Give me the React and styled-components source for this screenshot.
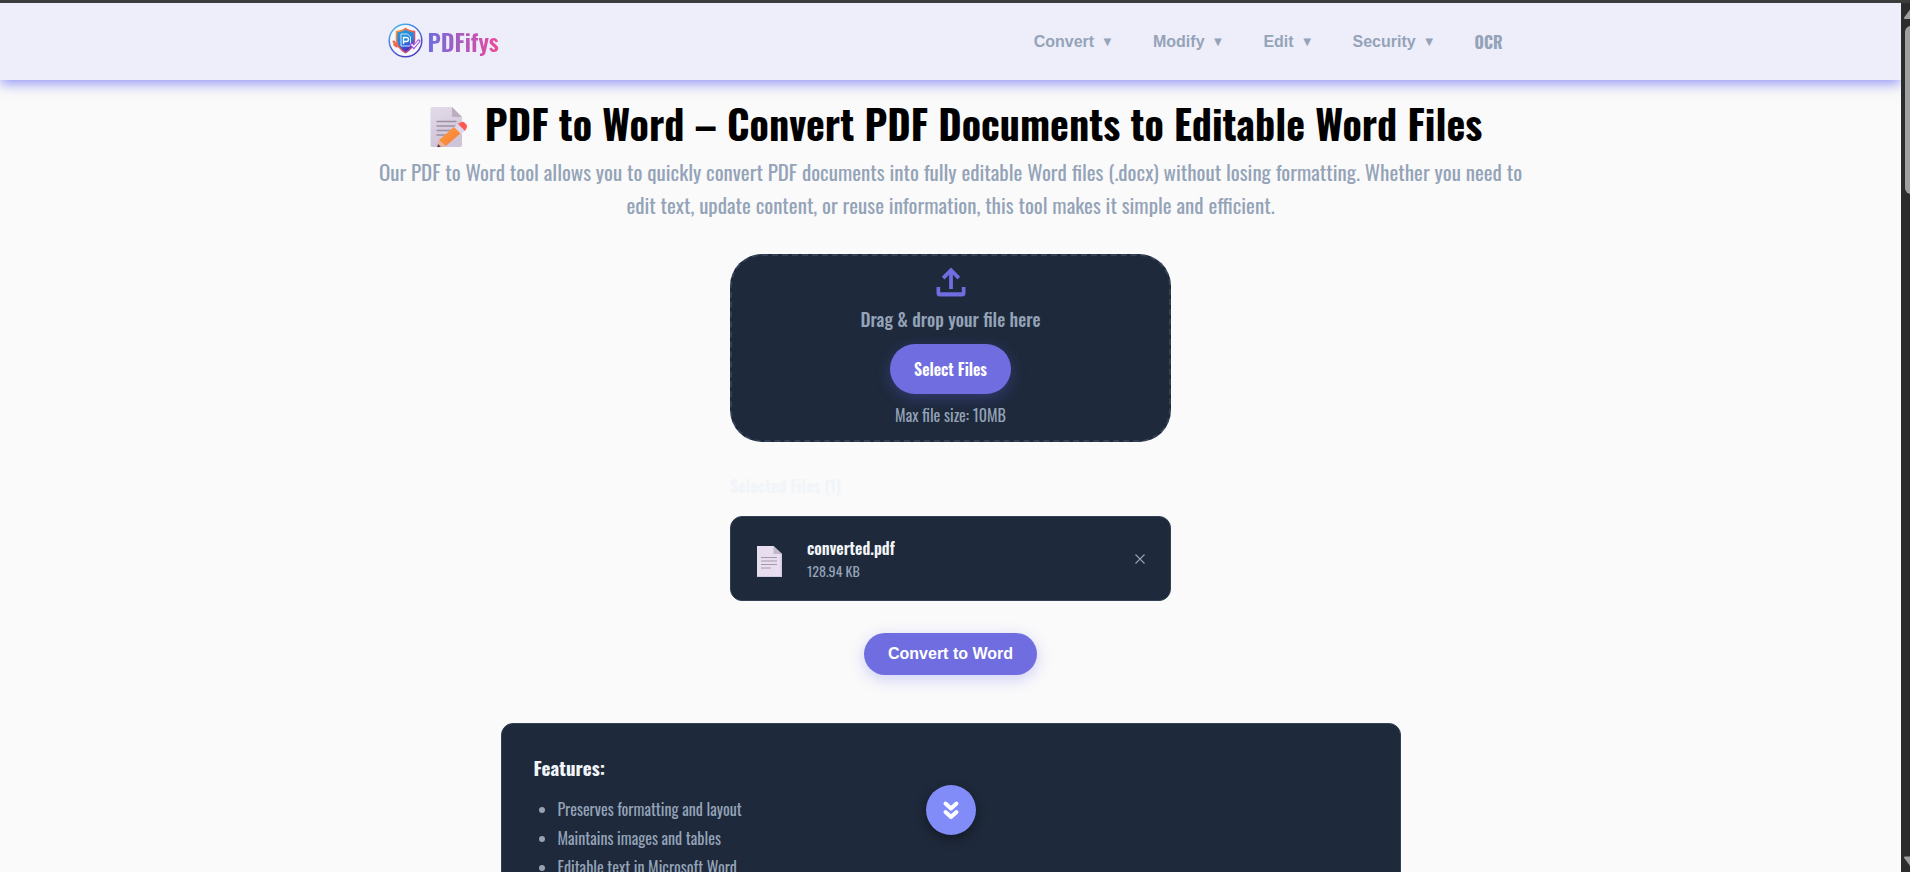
import React from 'react';
import styled, { createGlobalStyle } from 'styled-components';

const GlobalStyle = createGlobalStyle`
  *, *::before, *::after { box-sizing: border-box; }
  body {
    margin: 0;
    background: #fafafa;
    color: #000;
    font-family: Oswald, 'Liberation Sans', sans-serif;
    font-size: 16px;
    line-height: 24px;
  }
  h1, h2, h3, p, ul { margin: 0; }
`;

const Screen = styled.div`
  display: flex;
  flex-direction: column;
  height: 100vh;
  overflow: hidden;
`;

const TopStrip = styled.div`
  flex: none;
  height: 3px;
  background: #3c3c3c;
`;

const Body = styled.div`
  display: flex;
  flex: 1;
  min-height: 0;
`;

const Page = styled.div`
  position: relative;
  flex: 1;
  min-width: 0;
  overflow: hidden;
`;

const ScrollTrack = styled.div`
  flex: none;
  display: flex;
  flex-direction: column;
  width: 9px;
  overflow: hidden;
  background: #2c2c2c;
`;

const ScrollThumb = styled.div`
  flex: none;
  width: 12px;
  height: 168px;
  margin: 7px 0 auto 4px;
  border-radius: 6px;
  background: #9f9f9f;
`;

const ScrollArrow = styled.svg`
  flex: none;
  display: block;
  width: 14px;
  height: 16px;
  margin-left: 3px;
  fill: #9f9f9f;
`;

const Header = styled.header`
  height: 77px;
  background: #eeeefb;
  box-shadow: 0 4px 12px rgba(99, 102, 241, 0.65);
`;

const HeaderInner = styled.div`
  display: flex;
  align-items: center;
  justify-content: space-between;
  max-width: 1136px;
  height: 75px;
  margin: 0 auto;
  padding: 0 16px 0 5px;
`;

const Brand = styled.a`
  display: flex;
  align-items: center;
  gap: 5px;
  text-decoration: none;
`;

const BrandMark = styled.svg`
  width: 35px;
  height: 35px;
`;

const BrandName = styled.span`
  font-size: 24px;
  line-height: 36px;
  font-weight: 600;
  background: linear-gradient(90deg, #6f6ddf, #ec4899);
  background-clip: text;
  -webkit-background-clip: text;
  color: transparent;
`;

const Nav = styled.nav`
  display: flex;
  align-items: center;
  gap: 39px;
  padding-top: 2px;
`;

const NavButton = styled.button`
  display: flex;
  align-items: center;
  gap: 7px;
  padding: 0;
  border: 0;
  background: none;
  color: #94a3b8;
  font: 700 16px/24px 'Liberation Sans', Arial, sans-serif;
  cursor: pointer;
`;

const Caret = styled.span`
  font-size: 13px;
`;

const NavLink = styled.a`
  color: #94a3b8;
  font-weight: 700;
  text-decoration: none;
`;

const Main = styled.main`
  display: flex;
  flex-direction: column;
  align-items: center;
  padding: 13px 16px 0;
`;

const Title = styled.h1`
  display: flex;
  align-items: center;
  gap: 17px;
  font-size: 40px;
  line-height: 60px;
  font-weight: 700;
`;

const MemoIcon = styled.svg`
  width: 49px;
  height: 42px;
  margin-top: 7px;
`;

const Subtitle = styled.p`
  max-width: 1152px;
  margin-top: 2px;
  color: #94a3b8;
  font-size: 21px;
  line-height: 33px;
  text-align: center;
`;

const Uploader = styled.section`
  display: flex;
  flex-direction: column;
  align-items: center;
  width: 100%;
  max-width: 441px;
  margin-top: 33px;
`;

const DropZone = styled.div`
  display: flex;
  flex-direction: column;
  align-items: center;
  width: 100%;
  height: 188px;
  padding-top: 8px;
  border: 2px dashed #334155;
  border-radius: 32px;
  background: #1e293b;
  color: #94a3b8;
`;

const UploadIcon = styled.svg`
  width: 36px;
  height: 36px;
  fill: #6f6ddf;
`;

const DropText = styled.p`
  margin-top: 5px;
  font-size: 18px;
  line-height: 28px;
  font-weight: 500;
`;

const PillButton = styled.button`
  height: ${(p) => (p.$tall ? 50 : 42)}px;
  padding: 0 24px;
  border: 0;
  border-radius: 25px;
  background: #6f6ddf;
  box-shadow: 0 4px 15px rgba(99, 102, 241, 0.3);
  color: #fff;
  font-family: ${(p) => (p.$tall ? 'Oswald' : "'Liberation Sans', Arial")}, sans-serif;
  font-size: 16px;
  font-weight: ${(p) => (p.$tall ? 600 : 700)};
  cursor: pointer;
`;

const SelectButton = styled(PillButton)`
  margin-top: 11px;
`;

const Hint = styled.p`
  margin-top: 9px;
`;

const ListTitle = styled.h3`
  align-self: flex-start;
  margin: 32px 0 18px;
  color: #f1f5f9;
  font-size: 16px;
  font-weight: 700;
`;

const FileCard = styled.div`
  display: flex;
  align-items: center;
  width: 100%;
  height: 85px;
  padding: 0 24px;
  border: 1px solid #334155;
  border-radius: 12px;
  background: #1e293b;
`;

const PageIcon = styled.svg`
  width: 28px;
  height: 32px;
  margin-top: 6px;
`;

const FileInfo = styled.div`
  flex: 1;
  margin: 0 24px;
`;

const FileName = styled.div`
  color: #f1f5f9;
  font-weight: 600;
`;

const FileSize = styled.div`
  color: #94a3b8;
  font-size: 14px;
  line-height: 21px;
`;

const RemoveButton = styled.button`
  display: flex;
  padding: 0;
  border: 0;
  background: none;
  cursor: pointer;

  svg {
    width: 12px;
    height: 12px;
    stroke: #94a3b8;
  }
`;

const ConvertButton = styled(PillButton)`
  margin-top: 32px;
`;

const Features = styled.section`
  width: 100%;
  max-width: 900px;
  margin-top: 48px;
  padding: 28px 32px 32px;
  border: 1px solid #334155;
  border-radius: 12px;
  background: #1e293b;
`;

const FeaturesTitle = styled.h2`
  color: #f1f5f9;
  font-size: 19px;
  line-height: 30px;
  font-weight: 700;
`;

const FeatureList = styled.ul`
  margin-top: 15px;
  padding-left: 24px;
  color: #94a3b8;
`;

const Feature = styled.li`
  margin-bottom: 4px;
  line-height: 25px;
`;

const ScrollDownButton = styled.button`
  position: absolute;
  left: 50%;
  bottom: 37px;
  display: flex;
  align-items: center;
  justify-content: center;
  width: 50px;
  height: 50px;
  margin-left: -25px;
  padding: 0;
  border: 0;
  border-radius: 50%;
  background: #818cf8;
  box-shadow: 0 4px 12px rgba(0, 0, 0, 0.4);
  cursor: pointer;

  svg {
    width: 18px;
    height: 20px;
  }
`;

const menus = ['Convert', 'Modify', 'Edit', 'Security'];
const features = [
  'Preserves formatting and layout',
  'Maintains images and tables',
  'Editable text in Microsoft Word',
];

function Logo() {
  return (
    <BrandMark viewBox="0 0 35 35" aria-hidden="true">
      <defs>
        <linearGradient id="ring" x1="0" y1="0" x2="0.6" y2="1">
          <stop offset="0" stopColor="#45c8ee" />
          <stop offset="0.55" stopColor="#4a6fd6" />
          <stop offset="1" stopColor="#4a3cc0" />
        </linearGradient>
        <linearGradient id="edge" x1="0" y1="0" x2="1" y2="1">
          <stop offset="0" stopColor="#f7a23c" />
          <stop offset="0.5" stopColor="#ee5d56" />
          <stop offset="1" stopColor="#7a35c4" />
        </linearGradient>
        <linearGradient id="shield" x1="0" y1="0" x2="0.3" y2="1">
          <stop offset="0" stopColor="#2f97c4" />
          <stop offset="0.6" stopColor="#2385e6" />
          <stop offset="1" stopColor="#4d2fc0" />
        </linearGradient>
      </defs>
      <circle cx="17.5" cy="17.5" r="16.3" fill="#f6f7fe" stroke="url(#ring)" strokeWidth="1.5" />
      <path d="M17.5 4.5c3 2.300 6 3.100 9.800 3.300v8.700c0 6-4 10.500-9.800 14-5.800-3.500-9.800-8-9.800-14V7.800c3.800-.2 6.800-1 9.800-3.300z" fill="url(#edge)" />
      <path d="M17.500 6.500c2.600 1.900 5.200 2.600 8.200 2.900v7.300c0 5-3.400 8.800-8.200 11.900-4.800-3.100-8.200-6.900-8.200-11.900V9.400c3-.3 5.600-1 8.200-2.900z" fill="url(#shield)" />
      <path d="M13 11h6.500l3 3v7.500a1.500 1.500 0 0 1-1.500 1.500h-8z" fill="none" stroke="#c9ecff" strokeWidth="1" />
      <path d="M15.500 21v-6.500h3a2 2 0 0 1 0 4h-3" fill="none" stroke="#fff" strokeWidth="1.300" />
      <path d="M6 17l-1.800 2 1.500 1.200-.7 1.800 3 2.500 1.600-.4 2.400 1.400-2-3.500z" fill="#ef6b4a" />
      <path d="M23.500 21.500l2.300 2.500 5-6" fill="none" stroke="#a04be0" strokeWidth="3.400" strokeLinecap="round" />
      <path d="M23.800 21.700l2.100 2.100 4.600-5.500" fill="none" stroke="#fff" strokeWidth="1.400" strokeLinecap="round" />
    </BrandMark>
  );
}

function Memo() {
  return (
    <MemoIcon viewBox="-11 0 49 42" aria-hidden="true">
      <defs>
        <linearGradient id="memoPaper" x1="0" y1="0" x2="0.300" y2="1">
          <stop offset="0" stopColor="#e3dbe9" />
          <stop offset="1" stopColor="#cfc3d8" />
        </linearGradient>
        <linearGradient id="pencil" x1="0" y1="0" x2="1" y2="1">
          <stop offset="0" stopColor="#ffa03c" />
          <stop offset="1" stopColor="#f47a3a" />
        </linearGradient>
      </defs>
      <path d="M2 1h20l10 10v28a2 2 0 0 1-2 2H2a1.500 1.500 0 0 1-1.500-1.500v-37A1.500 1.500 0 0 1 2 1z" fill="url(#memoPaper)" />
      <path d="M22 1v8.500a1.500 1.500 0 0 0 1.500 1.500H32z" fill="#b9afc1" />
      <path d="M7 15.500h19M7 20h19M7 24.500h16M7 29h12" stroke="#9a91a2" strokeWidth="1.300" strokeLinecap="round" />
      <path d="M24.500 20.500l6.500 6.500-15 12.800-6.500 1.200-1.800-.8 1.300-6.200z" fill="url(#pencil)" />
      <path d="M9 34l6.800 5.800L8 41.300l-.8-.6z" fill="#e8b49b" />
      <path d="M8 38l2.800 2.700L7.300 41.300z" fill="#5a3350" />
      <path d="M27.800 17.700l7.200 7.100-4 3.200-7-7z" fill="#ddd6ee" />
      <path d="M29.500 17l2-1a2.500 2.500 0 0 1 3 .5l2 2.200a2.500 2.500 0 0 1 .2 3L35 25l-7.200-7.200z" fill="#ff5a50" />
    </MemoIcon>
  );
}

function PageGlyph() {
  return (
    <PageIcon viewBox="0 0 28 32" aria-hidden="true">
      <path d="M2 0h16.500l8.500 8v23H2z" fill="#e8def0" />
      <path d="M25.500 8H27v23H2v-1h23.500z" fill="#d5c9dd" />
      <path d="M18.500 0v7.200a.8.8 0 0 0 .8.8H27z" fill="#c2b8cb" />
      <path d="M6 11.500h16M6 15h16M6 18.500h16M6 22h10" stroke="#a198aa" strokeWidth="1.200" />
    </PageIcon>
  );
}

export default function App() {
  return (
    <Screen>
      <GlobalStyle />
      <TopStrip />
      <Body>
        <Page>
          <Header>
            <HeaderInner>
              <Brand href="#home">
                <Logo />
                <BrandName>PDFifys</BrandName>
              </Brand>
              <Nav>
                {menus.map((name) => (
                  <NavButton key={name} type="button">
                    {name}
                    <Caret>▼</Caret>
                  </NavButton>
                ))}
                <NavLink href="#ocr">OCR</NavLink>
              </Nav>
            </HeaderInner>
          </Header>
          <Main>
            <Title>
              <Memo />
              PDF to Word – Convert PDF Documents to Editable Word Files
            </Title>
            <Subtitle>
              Our PDF to Word tool allows you to quickly convert PDF documents into fully editable
              Word files (.docx) without losing formatting. Whether you need to edit text, update
              content, or reuse information, this tool makes it simple and efficient.
            </Subtitle>
            <Uploader>
              <DropZone>
                <UploadIcon viewBox="0 0 36 36" aria-hidden="true">
                  <path d="M18 3.500l9.200 9.200-2.700 2.800-4.600-4.700V25h-3.800V10.800l-4.600 4.700-2.700-2.800zM3.500 23h3.700v5.300h21.600V23h3.700v6a3.500 3.500 0 0 1-3.500 3.500H7A3.500 3.500 0 0 1 3.500 29z" />
                </UploadIcon>
                <DropText>Drag &amp; drop your file here</DropText>
                <SelectButton type="button" $tall>Select Files</SelectButton>
                <Hint>Max file size: 10MB</Hint>
              </DropZone>
              <ListTitle>Selected Files (1)</ListTitle>
              <FileCard>
                <PageGlyph />
                <FileInfo>
                  <FileName>converted.pdf</FileName>
                  <FileSize>128.94 KB</FileSize>
                </FileInfo>
                <RemoveButton type="button" aria-label="Remove converted.pdf">
                  <svg viewBox="0 0 12 12">
                    <path d="M1.500 1.500l9 9M10.500 1.500l-9 9" fill="none" strokeWidth="1.100" />
                  </svg>
                </RemoveButton>
              </FileCard>
              <ConvertButton type="button">Convert to Word</ConvertButton>
            </Uploader>
            <Features>
              <FeaturesTitle>Features:</FeaturesTitle>
              <FeatureList>
                {features.map((text) => (
                  <Feature key={text}>{text}</Feature>
                ))}
              </FeatureList>
            </Features>
          </Main>
          <ScrollDownButton type="button" aria-label="Scroll down">
            <svg viewBox="0 0 18 20" fill="none" stroke="#fff" strokeWidth="4" strokeLinecap="round" strokeLinejoin="round">
              <path d="M3.500 3.500L9 8.500l5.500-5M3.500 12L9 17l5.500-5" />
            </svg>
          </ScrollDownButton>
        </Page>
        <ScrollTrack aria-hidden="true">
          <ScrollArrow viewBox="0 0 14 16"><path d="M7 5l7 9.500a1 1 0 0 1-1 1.500H1a1 1 0 0 1-.8-1.500z" /></ScrollArrow>
          <ScrollThumb />
          <ScrollArrow viewBox="0 0 14 16"><path d="M7 11L.2 2A1 1 0 0 1 1 .5h12a1 1 0 0 1 .8 1.500z" /></ScrollArrow>
        </ScrollTrack>
      </Body>
    </Screen>
  );
}
